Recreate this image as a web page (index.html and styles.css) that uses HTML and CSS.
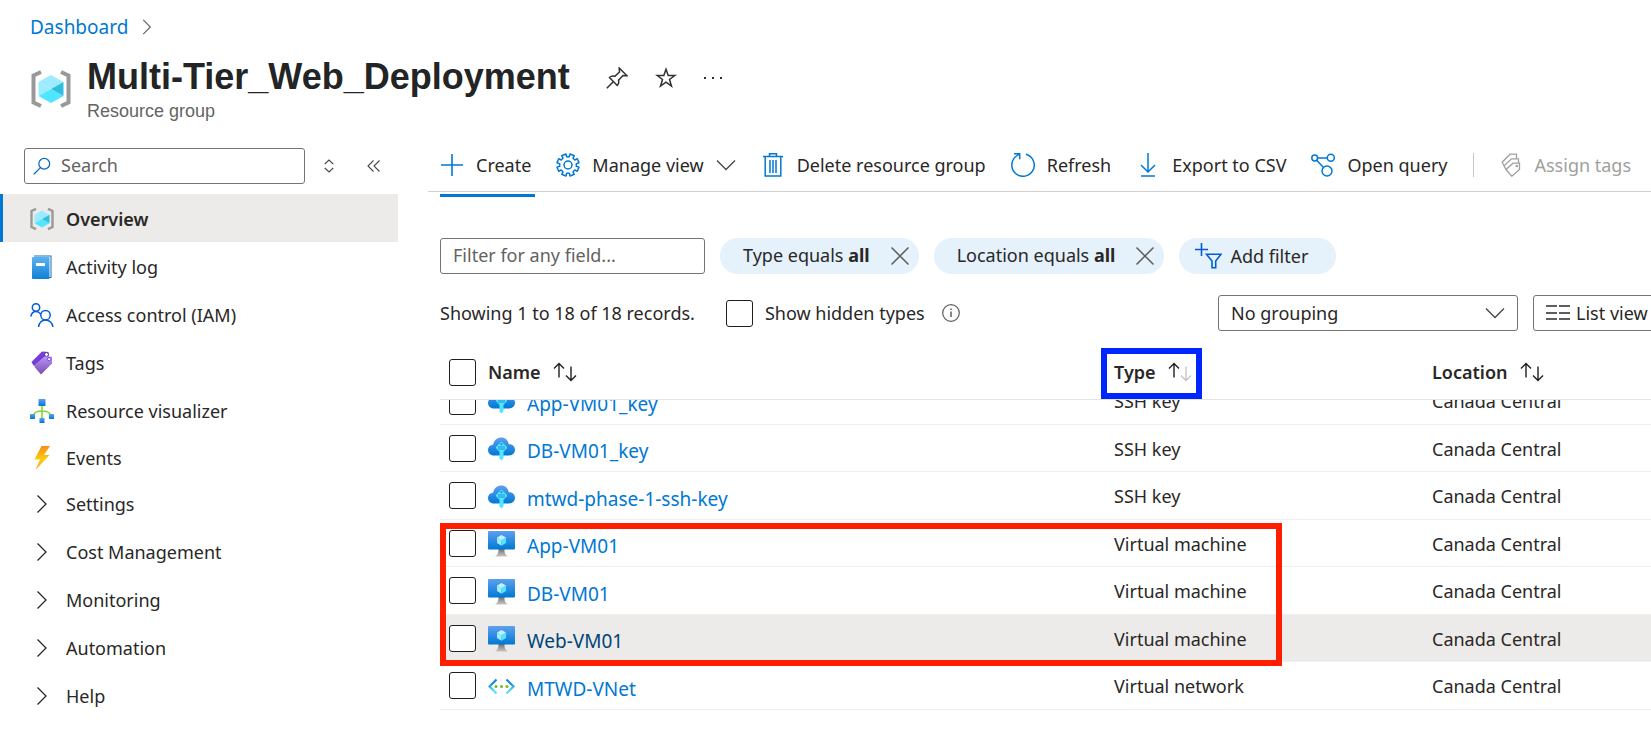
FILE: index.html
```html
<!DOCTYPE html>
<html lang="en">
<head>
<meta charset="utf-8">
<title>Multi-Tier_Web_Deployment</title>
<link rel="stylesheet" href="styles.css">
</head>
<body>
<svg class="sprite" aria-hidden="true">
  <defs>
    <linearGradient id="g-blue" x1="0" y1="0" x2="0" y2="1"><stop offset="0" stop-color="#5ea0ef"/><stop offset="1" stop-color="#0078d4"/></linearGradient>
    <linearGradient id="g-book" x1="0" y1="0" x2="0" y2="1"><stop offset="0" stop-color="#5ab3f2"/><stop offset="1" stop-color="#1080d4"/></linearGradient>
    <linearGradient id="g-tag" x1="0" y1="0" x2="0" y2="1"><stop offset="0" stop-color="#b796f9"/><stop offset="1" stop-color="#7b4cab"/></linearGradient>
    <linearGradient id="g-bolt" x1="0" y1="0" x2="0" y2="1"><stop offset="0" stop-color="#f78d1e"/><stop offset=".55" stop-color="#fecd0b"/><stop offset="1" stop-color="#f9a01b"/></linearGradient>
    <linearGradient id="g-stand" x1="0" y1="0" x2="0" y2="1"><stop offset="0" stop-color="#707070"/><stop offset="1" stop-color="#c8c8c8"/></linearGradient>
    <linearGradient id="g-vnet" x1="0" y1="0" x2="0" y2="1"><stop offset=".3" stop-color="#1988d9"/><stop offset=".8" stop-color="#54e0fb"/></linearGradient>
    <symbol id="i-group" viewBox="0 0 40 38">
      <path d="M10 2 2.500 5.500V32.500L10 36" fill="none" stroke="#999" stroke-width="4"/>
      <path d="M30 2 37.500 5.500V32.500L30 36" fill="none" stroke="#999" stroke-width="4"/>
      <path d="M20 5 32.500 12 20 19 7.500 12Z" fill="#9cebff"/>
      <path d="M7.500 12 20 19 7.500 26Z" fill="#9cebff"/>
      <path d="M7.500 26 20 19V33Z" fill="#50e6ff"/>
      <path d="M20 19 32.500 26 20 33Z" fill="#50e6ff"/>
      <path d="M20 19 32.500 12V26Z" fill="#32bedd"/>
    </symbol>
    <symbol id="i-book" viewBox="0 0 24 24">
      <path d="M4 .500H21.500V23H4Z" fill="#1b6fb5"/><path d="M4 1.500H20.500V22H4Z" fill="#fff"/>
      <rect x="2" y="2" width="17.500" height="22" rx="1" fill="url(#g-book)"/><rect x="6" y="8" width="9" height="3" fill="#fff"/>
    </symbol>
    <symbol id="i-people" viewBox="0 0 24 24">
      <g fill="none" stroke="#015cda" stroke-width="1.500"><circle cx="6" cy="4.500" r="3.700"/><circle cx="15.500" cy="12.200" r="4.700"/><path d="M.800 13.500C1.500 10.500 3.500 8.600 6 8.600c2 0 3.500 1 4.700 2.500M8.500 24c.800-4.500 3.500-7 7-7s6.500 2.500 7.500 7"/></g>
    </symbol>
    <symbol id="i-tag" viewBox="0 0 24 24">
      <path d="M12 .500 18.500 1V9L6 14.500H3.500L1.500 11Z" fill="#773adc"/><circle cx="16.500" cy="3.500" r="2" fill="#fff" stroke="#552f99"/>
      <path d="M14.500 5.500H22V12.500L11 23.500 4.500 16V14Z" fill="url(#g-tag)"/><circle cx="19.200" cy="8.200" r="1.700" fill="#fff" stroke="#773adc"/>
    </symbol>
    <symbol id="i-tree" viewBox="0 0 24 24">
      <path d="M12 6V20M3 17c1-4 4-5 9-5s8 1 9 5" fill="none" stroke="#86d633" stroke-width="1.600"/>
      <g fill="url(#g-blue)"><rect x="8.500" y="0" width="7" height="7" rx=".600"/><rect x="0" y="15" width="5" height="5" rx=".500"/><rect x="19" y="15" width="5" height="5" rx=".500"/><rect x="9.500" y="19" width="5" height="5" rx=".500"/></g>
    </symbol>
    <symbol id="i-bolt" viewBox="0 0 24 24"><path d="M11.500 0H20L14 9h5.500L5.500 24 10 13.500H4.500Z" fill="url(#g-bolt)"/></symbol>
    <symbol id="i-right" viewBox="0 0 24 24"><path d="M7.500 3.500 16 12 7.500 20.500" fill="none" stroke="currentColor" stroke-width="1.300"/></symbol>
    <symbol id="i-down" viewBox="0 0 20 20"><path d="M1 5.500 10 14.500 19 5.500" fill="none" stroke="currentColor" stroke-width="1.300"/></symbol>
    <symbol id="i-pin" viewBox="0 0 22 22"><path d="M.800 21.200 7 15M3.500 10.500C5 9 7 8.800 8.800 9.300L13.500 5 13.200 1 21 8.700 17 8.500 12.500 13.200c.600 1.800.300 3.700-1.300 5.300Z" fill="none" stroke="#323130" stroke-width="1.500"/></symbol>
    <symbol id="i-star" viewBox="0 0 22 22"><path d="M11 2.300 13.200 8.500H19.800L14.500 12.500 16.500 19.200 11 15.200 5.500 19.200 7.500 12.500 2.200 8.500H8.800Z" fill="none" stroke="#323130" stroke-width="1.500"/></symbol>
    <symbol id="i-more" viewBox="0 0 18 4"><path d="M0 1H2V3H0ZM8 1H10V3H8ZM16 1H18V3H16Z" fill="#323130"/></symbol>
    <symbol id="i-search" viewBox="0 0 20 20"><g fill="none" stroke="#0f6cbd" stroke-width="1.400"><circle cx="12.500" cy="7.500" r="6"/><path d="M8.300 11.800.800 19.200"/></g></symbol>
    <symbol id="i-updown" viewBox="0 0 10 14"><path d="M.800 5 5 1 9.200 5M.800 9 5 13 9.200 9" fill="none" stroke="#484644" stroke-width="1.100"/></symbol>
    <symbol id="i-collapse" viewBox="0 0 14 14"><path d="M6.500 1.500 1 7 6.500 12.500M12.500 1.500 7 7 12.500 12.500" fill="none" stroke="#484644" stroke-width="1.100"/></symbol>
    <symbol id="i-plus" viewBox="0 0 24 24"><path d="M12 1V23M1 12H23" stroke="#0078d4" stroke-width="1.600"/></symbol>
    <symbol id="i-gear" viewBox="0 0 24 24"><g fill="none" stroke="#0078d4" stroke-width="1.500" stroke-linejoin="round"><path d="M9.900 1 10.700 3.700H13.300L14.100 1 18.300 2.700 17 5.200 18.800 7 21.300 5.700 23 9.900 20.300 10.700V13.300L23 14.100 21.300 18.300 18.800 17 17 18.800 18.300 21.300 14.100 23 13.300 20.300H10.700L9.900 23 5.700 21.300 7 18.800 5.200 17 2.700 18.300 1 14.100 3.700 13.300V10.700L1 9.900 2.700 5.700 5.200 7 7 5.200 5.700 2.700Z"/><circle cx="12" cy="12" r="4"/></g></symbol>
    <symbol id="i-trash" viewBox="0 0 20 24"><path d="M0 3.500H20M6.500 3V.800H13.500V3M2.200 4V23H17.800V4M7 7V20M10 7V20M13 7V20" fill="none" stroke="#0078d4" stroke-width="1.500"/></symbol>
    <symbol id="i-refresh" viewBox="0 0 24 24"><path d="M15 1.300A11.200 11.200 0 1 1 5.500 3L8.500 1M3 .800H8.700V6.200" fill="none" stroke="#0078d4" stroke-width="1.500"/></symbol>
    <symbol id="i-export" viewBox="0 0 16 24"><path d="M8 0V18.500M1 12 8 19 15 12M1 23H15" fill="none" stroke="#0078d4" stroke-width="1.500"/></symbol>
    <symbol id="i-query" viewBox="0 0 24 24"><g fill="none" stroke="#0078d4" stroke-width="1.500"><circle cx="3.700" cy="5" r="2.900"/><circle cx="19.800" cy="4.700" r="3.500"/><circle cx="16" cy="18" r="5"/><path d="M6.600 5H16.300M5.700 7.200 12.500 14.400"/></g></symbol>
    <symbol id="i-tags" viewBox="0 0 20 24"><g fill="none" stroke="#a19f9d" stroke-width="1.300"><path d="M5 16.500 12 10.200H18.500V16.500L10.800 23.200Z"/><path d="M5 16.500 3 12.800 10.500 5.800H17.500V10"/><path d="M3 12.800 1.200 9.200 9 1.200H15.500V5.500"/><circle cx="15.800" cy="13" r=".600"/></g></symbol>
    <symbol id="i-close" viewBox="0 0 20 20"><path d="M1.500 1.500 18.500 18.500M18.500 1.500 1.500 18.500" stroke="#605e5c" stroke-width="1.500"/></symbol>
    <symbol id="i-addfilter" viewBox="0 0 27 26"><path d="M6.500 0V13M0 6.500H13M11.500 11.300H26L20.700 18V24.700H17V18Z" fill="none" stroke="#015cda" stroke-width="1.600"/></symbol>
    <symbol id="i-info" viewBox="0 0 18 18"><circle cx="9" cy="9" r="8.300" fill="none" stroke="#605e5c" stroke-width="1.200"/><path d="M9 7.500V13M9 4.500V6" stroke="#605e5c" stroke-width="1.500"/></symbol>
    <symbol id="i-list" viewBox="0 0 24 16"><path d="M0 1H11M13 1H24M0 8H11M13 8H24M0 14H11M13 14H24" stroke="#605e5c" stroke-width="2"/></symbol>
    <symbol id="i-up-arrow" viewBox="0 0 12 16"><path d="M6 15.500V1.500M1 6.500 6 1.500 11 6.500" fill="none" stroke="currentColor" stroke-width="1.400"/></symbol>
    <symbol id="i-down-arrow" viewBox="0 0 12 16"><path d="M6 .500V14.500M1 9.500 6 14.500 11 9.500" fill="none" stroke="currentColor" stroke-width="1.400"/></symbol>
    <symbol id="i-key" viewBox="0 0 27 24">
      <path d="M6 18.500C2.500 18.500 0 16 0 13c0-3 2-5 5.200-5.500C6 3.500 9 .500 13.200.500c4 0 6.800 2.600 7.500 6.500C24.500 7.300 27 9.500 27 12.800c0 3.200-2.500 5.700-6 5.700Z" fill="url(#g-blue)"/>
      <path d="M13.500 4.500 18.500 9.500c.600.600.600 1.600 0 2.200L15.500 14.800V21L13.500 23.500 11.500 21.500V14.800L8.500 11.700c-.600-.600-.600-1.600 0-2.200Z" fill="#50e6ff"/>
      <path d="M10 10H17M10 12H17" stroke="#1b8fdf" stroke-width="1"/><circle cx="13.500" cy="7.200" r="1.100" fill="#1b8fdf"/>
    </symbol>
    <symbol id="i-vm" viewBox="0 0 27 26">
      <path d="M10.500 18H16.500C16.500 22 17 23.500 20 25.500H7C10 23.500 10.500 22 10.500 18Z" fill="url(#g-stand)"/>
      <rect width="27" height="18.500" rx="1" fill="url(#g-blue)"/>
      <path d="M13.500 4 18 6.600 13.500 9.300 9 6.600Z" fill="#c3f1ff"/><path d="M9 6.600 13.500 9.300V14.700L9 12Z" fill="#9cebff"/><path d="M18 6.600 13.500 9.300V14.700L18 12Z" fill="#50e6ff"/>
    </symbol>
    <symbol id="i-vnet" viewBox="0 0 27 18">
      <path d="M8.500 1.500 1.500 8.500 8.500 15.500M18.500 1.500 25.500 8.500 18.500 15.500" fill="none" stroke="url(#g-vnet)" stroke-width="2.200"/>
      <g fill="#76bc2d"><circle cx="8" cy="8.500" r="1.600"/><circle cx="13.500" cy="8.500" r="1.600"/><circle cx="19" cy="8.500" r="1.600"/></g>
    </symbol>
  </defs>
</svg>

<nav class="breadcrumb" aria-label="Breadcrumb"><a href="#">Dashboard</a><svg class="icon20"><use href="#i-right"/></svg></nav>

<header class="page-header">
  <svg class="header-icon"><use href="#i-group"/></svg>
  <div>
    <div class="title-row">
      <h1>Multi-Tier_Web_Deployment</h1>
      <button aria-label="Pin"><svg class="icon22"><use href="#i-pin"/></svg></button>
      <button aria-label="Favorite"><svg class="icon22"><use href="#i-star"/></svg></button>
      <button aria-label="More"><svg class="more"><use href="#i-more"/></svg></button>
    </div>
    <p class="subtitle">Resource group</p>
  </div>
</header>

<div class="layout">
  <aside class="sidebar">
    <div class="search-row">
      <label class="search-box"><svg class="icon18"><use href="#i-search"/></svg><input type="text" placeholder="Search" aria-label="Search"></label>
      <button aria-label="Expand all"><svg class="updown"><use href="#i-updown"/></svg></button>
      <button aria-label="Collapse menu"><svg class="icon14"><use href="#i-collapse"/></svg></button>
    </div>
    <nav class="menu" aria-label="Resource menu">
      <a href="#" class="active"><svg class="icon24"><use href="#i-group"/></svg>Overview</a>
      <a href="#"><svg class="icon24"><use href="#i-book"/></svg>Activity log</a>
      <a href="#"><svg class="icon24"><use href="#i-people"/></svg>Access control (IAM)</a>
      <a href="#"><svg class="icon24"><use href="#i-tag"/></svg>Tags</a>
      <a href="#"><svg class="icon24"><use href="#i-tree"/></svg>Resource visualizer</a>
      <a href="#" class="last"><svg class="icon24"><use href="#i-bolt"/></svg>Events</a>
      <button><svg class="icon24"><use href="#i-right"/></svg>Settings</button>
      <button><svg class="icon24"><use href="#i-right"/></svg>Cost Management</button>
      <button><svg class="icon24"><use href="#i-right"/></svg>Monitoring</button>
      <button><svg class="icon24"><use href="#i-right"/></svg>Automation</button>
      <button><svg class="icon24"><use href="#i-right"/></svg>Help</button>
    </nav>
  </aside>

  <main class="content">
    <div class="toolbar">
      <button><svg class="icon24"><use href="#i-plus"/></svg>Create</button>
      <button><svg class="icon24"><use href="#i-gear"/></svg>Manage view<svg class="chevron"><use href="#i-down"/></svg></button>
      <button><svg class="icon24"><use href="#i-trash"/></svg>Delete resource group</button>
      <button><svg class="icon24"><use href="#i-refresh"/></svg>Refresh</button>
      <button><svg class="icon24"><use href="#i-export"/></svg>Export to CSV</button>
      <button><svg class="icon24"><use href="#i-query"/></svg>Open query</button>
      <span class="divider"></span>
      <button disabled><svg class="icon24"><use href="#i-tags"/></svg>Assign tags</button>
    </div>
    <div class="tab-marker"></div>

    <div class="filters">
      <input class="filter-input" type="text" placeholder="Filter for any field..." aria-label="Filter for any field">
      <div class="pill"><span>Type equals <b>all</b></span><button aria-label="Remove type filter"><svg class="icon20"><use href="#i-close"/></svg></button></div>
      <div class="pill"><span>Location equals <b>all</b></span><button aria-label="Remove location filter"><svg class="icon20"><use href="#i-close"/></svg></button></div>
      <button class="pill add"><svg class="addfilter"><use href="#i-addfilter"/></svg>Add filter</button>
    </div>

    <div class="summary">
      <span>Showing 1 to 18 of 18 records.</span>
      <label class="hidden-types"><input type="checkbox">Show hidden types</label>
      <svg class="icon18"><use href="#i-info"/></svg>
      <div class="select-wrap"><select aria-label="Grouping"><option>No grouping</option></select><svg class="chevron"><use href="#i-down"/></svg></div>
      <button class="list-view"><svg class="list-icon"><use href="#i-list"/></svg>List view</button>
    </div>

    <div class="table-wrap">
      <table>
        <colgroup><col class="c-name"><col class="c-type"><col></colgroup>
        <thead>
          <tr>
            <th><div class="name-cell"><input type="checkbox" aria-label="Select all">Name<span class="sort"><svg><use href="#i-up-arrow"/></svg><svg class="lower"><use href="#i-down-arrow"/></svg></span></div></th>
            <th><div class="head-cell type-head">Type<span class="sort"><svg><use href="#i-up-arrow"/></svg><svg class="lower faded"><use href="#i-down-arrow"/></svg></span><span class="blue-box"></span></div></th>
            <th><div class="head-cell">Location<span class="sort"><svg><use href="#i-up-arrow"/></svg><svg class="lower"><use href="#i-down-arrow"/></svg></span></div></th>
          </tr>
        </thead>
        <tbody>
          <tr class="clipped">
            <td><div class="clip"><div class="name-cell"><input type="checkbox" aria-label="App-VM01_key"><svg class="row-icon key"><use href="#i-key"/></svg><a href="#">App-VM01_key</a></div></div></td>
            <td><div class="clip"><div class="cell">SSH key</div></div></td>
            <td><div class="clip"><div class="cell">Canada Central</div></div></td>
          </tr>
          <tr><td><div class="name-cell"><input type="checkbox" aria-label="DB-VM01_key"><svg class="row-icon key"><use href="#i-key"/></svg><a href="#">DB-VM01_key</a></div></td><td>SSH key</td><td>Canada Central</td></tr>
          <tr><td><div class="name-cell"><input type="checkbox" aria-label="mtwd-phase-1-ssh-key"><svg class="row-icon key"><use href="#i-key"/></svg><a href="#">mtwd-phase-1-ssh-key</a></div></td><td>SSH key</td><td>Canada Central</td></tr>
          <tr><td><div class="name-cell"><input type="checkbox" aria-label="App-VM01"><svg class="row-icon vm"><use href="#i-vm"/></svg><a href="#">App-VM01</a></div></td><td>Virtual machine</td><td>Canada Central</td></tr>
          <tr><td><div class="name-cell"><input type="checkbox" aria-label="DB-VM01"><svg class="row-icon vm"><use href="#i-vm"/></svg><a href="#">DB-VM01</a></div></td><td>Virtual machine</td><td>Canada Central</td></tr>
          <tr class="hovered"><td><div class="name-cell"><input type="checkbox" aria-label="Web-VM01"><svg class="row-icon vm"><use href="#i-vm"/></svg><a href="#">Web-VM01</a></div></td><td>Virtual machine</td><td>Canada Central</td></tr>
          <tr><td><div class="name-cell"><input type="checkbox" aria-label="MTWD-VNet"><svg class="row-icon vnet"><use href="#i-vnet"/></svg><a href="#">MTWD-VNet</a></div></td><td>Virtual network</td><td>Canada Central</td></tr>
        </tbody>
      </table>
      <div class="red-box"></div>
    </div>
  </main>
</div>
</body>
</html>
```

FILE: styles.css
```css
* { box-sizing: border-box; }
body {
  margin: 0;
  background: #fff;
  color: #292827;
  font: 18px/24px "Noto Sans", "Open Sans", sans-serif;
  overflow-x: hidden;
}
svg { display: block; flex: none; }
button, input, select { font: inherit; color: inherit; }
button { border: 0; background: none; padding: 0; display: flex; align-items: center; white-space: nowrap; }
a { color: #0078d4; text-decoration: none; }
.sprite { position: absolute; width: 0; height: 0; }
.icon14 { width: 14px; height: 14px; }
.icon18 { width: 18px; height: 18px; }
.icon20 { width: 20px; height: 20px; }
.icon22 { width: 22px; height: 22px; }
.icon24 { width: 24px; height: 24px; }
.chevron { width: 20px; height: 20px; color: #484644; }

.breadcrumb { display: flex; align-items: center; gap: 9px; padding: 15px 0 0 30px; color: #605e5c; font-size: 19px; }

.page-header { display: flex; gap: 16px; padding: 17px 0 0 31px; font-family: "Liberation Sans", Arial, sans-serif; }
.header-icon { width: 40px; height: 38px; margin-top: 14px; }
.title-row { display: flex; align-items: center; padding-top: 1px; }
.title-row h1 { margin: 0 36px 0 0; font-size: 36px; line-height: 40px; color: #222426; }
.title-row button { margin-right: 27px; padding-top: 2px; }
.more { width: 18px; height: 4px; }
.subtitle { margin: 3px 0 0; font-size: 18px; line-height: 22px; color: #646464; }

.layout { display: flex; padding-top: 26px; }
.sidebar { flex: none; width: 428px; padding-right: 30px; }
.search-row { display: flex; align-items: center; padding-left: 24px; }
.search-box { display: flex; align-items: center; gap: 10px; width: 281px; height: 36px; padding: 0 8px; border: 1px solid #767472; border-radius: 3px; margin-right: 19px; }
.search-box input { flex: 1; min-width: 0; border: 0; outline: 0; padding: 0 0 2px; background: none; }
::placeholder { color: #646260; opacity: 1; }
.updown { width: 10px; height: 14px; margin-right: 33px; }
.menu { padding-top: 10px; }
.menu a, .menu button { display: flex; align-items: center; gap: 12px; width: 100%; height: 48px; padding-left: 30px; color: #292827; }
.menu a { padding-top: 2px; }
.menu .active { position: relative; background: #edebe9; font-weight: 600; }
.menu .active::before { content: ""; position: absolute; left: 0; top: 0; bottom: 0; width: 3px; background: #0078d4; }
.menu .last { height: 46px; }

.content { flex: 1; min-width: 0; }
.toolbar { display: flex; align-items: center; height: 44px; padding: 0 0 10px 12px; border-bottom: 1px solid #d2d0ce; }
.toolbar button { flex: none; gap: 12px; margin-right: 25px; }
.toolbar button:disabled { color: #a19f9d; }
.divider { flex: none; width: 1px; height: 24px; background: #c8c6c4; margin-right: 25px; }
.tab-marker { width: 95px; height: 3px; margin: 2px 0 0 12px; background: #0078d4; }

.filters { display: flex; gap: 15px; padding: 41px 0 0 12px; }
.filter-input { width: 265px; height: 36px; padding: 0 12px 2px; border: 1px solid #767472; border-radius: 3px; }
.pill { display: flex; align-items: center; gap: 20px; height: 36px; padding: 0 9px 0 23px; border-radius: 18px; background: #e5f1fb; white-space: nowrap; }
.pill span { padding-bottom: 2px; }
.pill.add { gap: 8px; padding: 0 28px 0 16px; }
.addfilter { width: 27px; height: 26px; }

.summary { display: flex; align-items: center; padding: 21px 0 0 12px; white-space: nowrap; }
input[type="checkbox"] { appearance: none; flex: none; width: 27px; height: 27px; margin: 0; border: 1px solid #201f1e; border-radius: 3px; background: #fff; }
.hidden-types { display: flex; align-items: center; gap: 12px; margin: 0 17px 0 31px; }
.select-wrap { position: relative; flex: none; width: 300px; margin-left: auto; }
.select-wrap select { appearance: none; width: 100%; height: 36px; padding: 0 40px 0 12px; border: 1px solid #767472; border-radius: 3px; background: #fff; }
.select-wrap .chevron { position: absolute; right: 13px; top: 8px; pointer-events: none; }
.list-view { flex: none; gap: 6px; width: 130px; height: 36px; margin: 0 -12px 0 15px; padding-left: 12px; border: 1px solid #767472; border-radius: 3px; }
.list-icon { width: 24px; height: 16px; }

.table-wrap { position: relative; margin: 14px 0 0 12px; }
table { width: 100%; table-layout: fixed; border-collapse: separate; border-spacing: 0; }
.c-name { width: 674px; }
.c-type { width: 318px; }
th, td { padding: 0; text-align: left; height: 47px; border-bottom: 1px solid #f0efee; white-space: nowrap; }
td + td { padding-top: 1px; }
tbody tr:nth-child(odd) td { height: 48px; }
th { height: 55px; border-color: #e6e5e4; font-weight: 600; }
.name-cell { display: flex; align-items: center; padding-left: 9px; }
.name-cell input { margin-right: 12px; }
.head-cell { display: flex; align-items: center; }
.type-head { position: relative; }
.sort { display: flex; margin-left: 12px; color: #201f1e; }
.sort svg { width: 12px; height: 16px; }
.sort .lower { margin-top: 4px; }
.sort .faded { color: #c8c6c4; }
.row-icon { width: 27px; margin: 2px 12px 0 0; }
.key { height: 24px; }
.vm { height: 26px; }
.vnet { height: 18px; }
.name-cell a { padding-top: 6px; font-size: 19px; }
tbody tr.clipped td { height: 25px; padding-top: 0; }
.clip { display: flex; align-items: flex-end; height: 24px; overflow: hidden; }
.clip .name-cell, .clip .cell { flex: none; display: flex; align-items: center; height: 46px; }
.hovered td { background: #edebe9; }
.hovered a { color: #004578; }
.blue-box { position: absolute; left: -13px; top: -12px; width: 101px; height: 51px; border: 6px solid #0026ff; }
.red-box { position: absolute; left: 0; top: 178px; width: 842px; height: 143px; border: 6px solid #ff1e00; }
```
